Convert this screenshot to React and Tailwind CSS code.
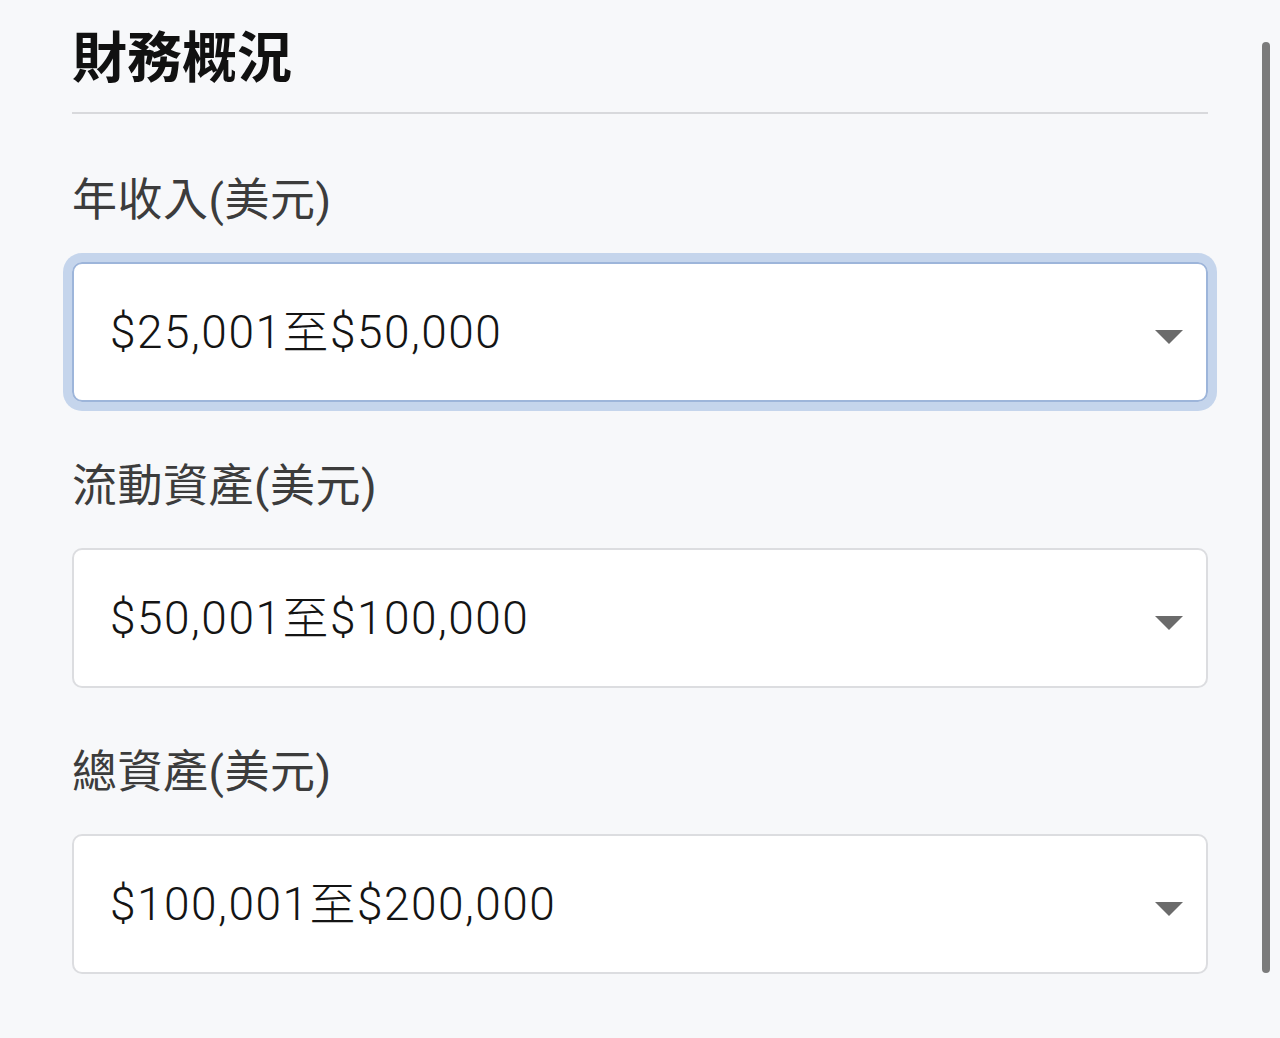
import React from "react";

const font = { fontFamily: 'Roboto, "Noto Sans CJK TC", sans-serif' };

function Caret() {
  return (
    <svg width="30" height="16" viewBox="0 0 30 16" className="shrink-0">
      <polygon points="1,1 29,1 15,15" fill="#6b6b6b" />
    </svg>
  );
}

function SelectBox({ value, focused }) {
  return (
    <div
      className={
        "rounded-[10px] " +
        (focused ? "ring-[9px] ring-[#c5d5ec]" : "")
      }
    >
      <div
        className={
          "h-[140px] flex items-center justify-between pl-[36px] pr-[22px] bg-white rounded-[10px] border-2 " +
          (focused ? "border-[#9db5da]" : "border-[#dcdde0]")
        }
      >
        <span className="text-[46px] font-light tracking-[1.5px] text-[#141414] leading-none">{value}</span>
        <div className="pt-[10px]">
          <Caret />
        </div>
      </div>
    </div>
  );
}

function Field({ label, value, focused }) {
  return (
    <div className="flex flex-col">
      <div className="text-[45px] tracking-[0.5px] leading-none text-[#3c3c3c] h-[60px] flex items-center">{label}</div>
      <div className="h-[32px]" />
      <SelectBox value={value} focused={focused} />
    </div>
  );
}

export default function App() {
  return (
    <div className="relative w-full min-h-[1038px] bg-[#f7f8fa] overflow-hidden" style={font}>
      <div className="w-[1136px] ml-[72px] pt-[26px] flex flex-col">
        <h1 className="text-[55px] font-bold leading-none text-[#111] h-[64px] flex items-center">財務概況</h1>
        <div className="mt-[22px] h-[2px] bg-[#d8d9dc]" />
        <div className="mt-[56px] flex flex-col gap-[54px]">
          <Field label="年收入(美元)" value="$25,001至$50,000" focused />
          <Field label="流動資產(美元)" value="$50,001至$100,000" />
          <Field label="總資產(美元)" value="$100,001至$200,000" />
        </div>
      </div>
      <div className="absolute left-[1262px] top-[42px] w-[8px] h-[931px] rounded-full bg-[#7b7b7b]" />
    </div>
  );
}
